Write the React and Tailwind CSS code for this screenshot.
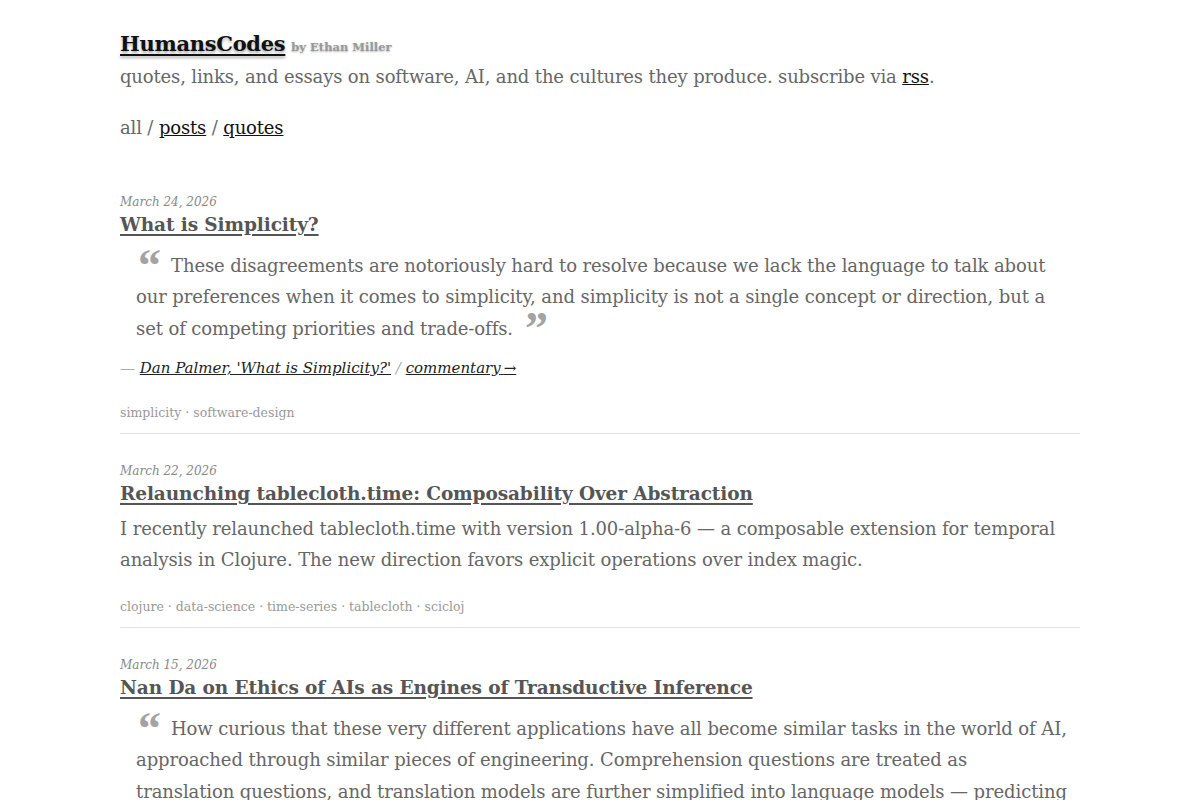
const posts = [
  {
    date: 'March 24, 2026',
    title: 'What is Simplicity?',
    quote:
      'These disagreements are notoriously hard to resolve because we lack the language to talk about our preferences when it comes to simplicity, and simplicity is not a single concept or direction, but a set of competing priorities and trade-offs.',
    source: "Dan Palmer, 'What is Simplicity?'",
    tags: ['simplicity', 'software-design'],
  },
  {
    date: 'March 22, 2026',
    title: 'Relaunching tablecloth.time: Composability Over Abstraction',
    body: 'I recently relaunched tablecloth.time with version 1.00-alpha-6 — a composable extension for temporal analysis in Clojure. The new direction favors explicit operations over index magic.',
    tags: ['clojure', 'data-science', 'time-series', 'tablecloth', 'scicloj'],
  },
  {
    date: 'March 15, 2026',
    title: 'Nan Da on Ethics of AIs as Engines of Transductive Inference',
    quote:
      'How curious that these very different applications have all become similar tasks in the world of AI, approached through similar pieces of engineering. Comprehension questions are treated as translation questions, and translation models are further simplified into language models — predicting the next word in a sequence.',
    source: 'Nan Da, “Ethics of AIs”',
    tags: ['ai', 'ethics'],
  },
];

// heavy curly quote marks hung on the text baseline without growing the line box
function Mark({ children, className }) {
  return (
    <span
      className={`relative font-['Liberation_Serif',serif] text-[46px] font-bold leading-[0] tracking-normal text-[#a3a3a3] ${className}`}
    >
      {children}
    </span>
  );
}

function Post({ post }) {
  return (
    <article className="border-b border-[#e2e2e2] pb-[11px] pt-[28px]">
      <div className="text-[12px] italic leading-[18px] text-[#888]">{post.date}</div>
      <h2 className="text-[18.5px] font-bold leading-[28px] tracking-[-0.1px] text-[#555]">
        <a href="#" className="underline decoration-2 underline-offset-[3px]">
          {post.title}
        </a>
      </h2>
      {post.quote && (
        <>
          <blockquote className="mt-[10.5px] pl-[16px] pr-[12px] text-[18px] leading-[31.5px] tracking-[-0.1px] text-[#666]">
            <Mark className="top-[9px] mr-[10px] ml-[2px]">“</Mark>
            {post.quote}
            <Mark className="top-[9px] ml-[12px]">”</Mark>
          </blockquote>
          <p className="mt-[13px] text-[15px] italic leading-[22px] text-[#aaa]">
            —{' '}
            <a href="#" className="text-[#222] underline">
              {post.source}
            </a>{' '}
            /{' '}
            <a href="#" className="text-[#222] underline">
              commentary{'\u2009'}→
            </a>
          </p>
        </>
      )}
      {post.body && (
        <p className="mt-[5px] text-[18px] leading-[31px] tracking-[-0.1px] text-[#666]">{post.body}</p>
      )}
      <div
        className={`${post.quote ? 'mt-[25px]' : 'mt-[23px]'} text-[12.5px] leading-[18px] text-[#999]`}
      >
        {post.tags.join(' · ')}
      </div>
    </article>
  );
}

export default function App() {
  return (
    <div className="min-h-screen bg-white font-['DejaVu_Serif',serif]">
      <div className="mx-auto w-[960px] pt-[28px]">
        <header>
          <div className="flex h-[34px] items-baseline gap-[6px]">
            <a
              href="#"
              className="text-[21px] font-bold tracking-[-0.3px] text-[#111] underline decoration-2 underline-offset-[3px] [text-shadow:0_2px_3px_rgba(0,0,0,0.35)]"
            >
              HumansCodes
            </a>
            <span className="text-[11.5px] font-bold text-[#999] [text-shadow:0_1px_2px_rgba(0,0,0,0.3)]">
              by Ethan Miller
            </span>
          </div>
          <p className="text-[18px] leading-[30px] tracking-[-0.15px] text-[#666]">
            quotes, links, and essays on software, AI, and the cultures they produce. subscribe via{' '}
            <a href="#" className="text-[#111] underline">
              rss
            </a>
            .
          </p>
          <nav className="mt-[21px] text-[18px] leading-[30px] tracking-[-0.15px] text-[#666]">
            all /{' '}
            <a href="#" className="text-[#111] underline">
              posts
            </a>{' '}
            /{' '}
            <a href="#" className="text-[#111] underline">
              quotes
            </a>
          </nav>
        </header>
        <main className="mt-[22px]">
          {posts.map((post) => (
            <Post key={post.date} post={post} />
          ))}
        </main>
      </div>
    </div>
  );
}
